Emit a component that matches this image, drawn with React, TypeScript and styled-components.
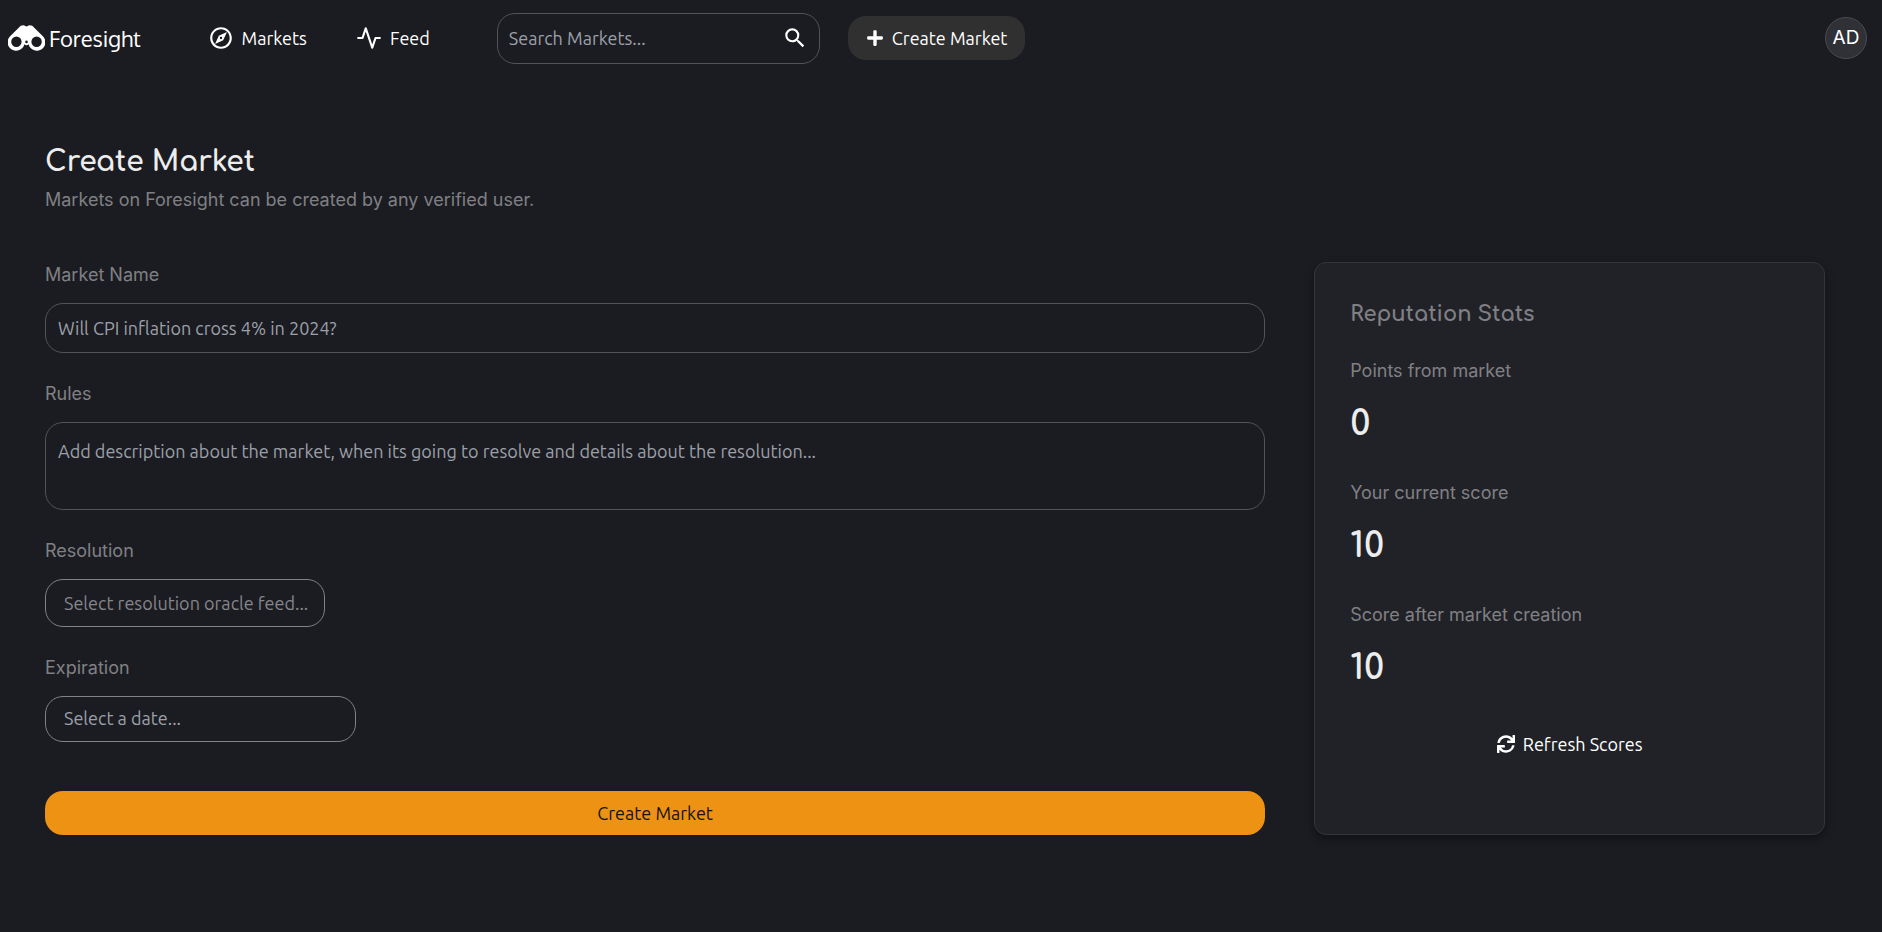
import React, { useId } from 'react';
import styled, { createGlobalStyle, css } from 'styled-components';
import { FaPlus, FaSync } from 'react-icons/fa';
import { FiActivity } from 'react-icons/fi';
import { MdOutlineExplore, MdSearch } from 'react-icons/md';

const colors = {
  page: '#1b1c21',
  card: '#212227',
  cardLine: '#34353a',
  fieldLine: '#525358',
  strongLine: '#818286',
  heading: '#ededed',
  label: '#808084',
  placeholder: '#9da0a9',
  accent: '#ee9213',
  button: '#303030',
};

const fonts = {
  ui: "Ubuntu, 'Noto Sans', sans-serif",
  body: 'Inter, sans-serif',
  display: 'Comfortaa, Lato, sans-serif',
  brand: 'Oxygen, Lato, sans-serif',
};

const GlobalStyle = createGlobalStyle`
  *, *::before, *::after {
    box-sizing: border-box;
  }

  body {
    margin: 0;
    background: ${colors.page};
    color: #fff;
    font: 18px/24px ${fonts.ui};
  }

  h1, h2, p, dl, dt, dd {
    margin: 0;
  }

  button, input, select, textarea {
    font: inherit;
    color: inherit;
  }

  svg {
    flex: none;
  }
`;

const TopBar = styled.header`
  display: flex;
  align-items: center;
  height: 76px;
  padding: 0 15px 0 8px;
`;

const Brand = styled.a`
  display: flex;
  align-items: center;
  gap: 4px;
  color: #fff;
  font: 22px/28px ${fonts.brand};
  text-decoration: none;
`;

const Nav = styled.nav`
  display: flex;
  gap: 49px;
  margin: 0 67px;
`;

const NavLink = styled.a`
  display: flex;
  align-items: center;
  gap: 8px;
  color: #fff;
  text-decoration: none;
`;

const fieldBox = css`
  width: 100%;
  border: 1px solid ${colors.fieldLine};
  border-radius: 18px;
  background: transparent;
  outline: none;

  &::placeholder {
    color: ${colors.placeholder};
    opacity: 1;
  }
`;

const SearchBox = styled.form`
  display: flex;
  align-items: center;
  width: 323px;
  height: 51px;
  margin-right: 28px;
  padding: 0 11px;
  border: 1px solid ${colors.fieldLine};
  border-radius: 18px;
`;

const SearchInput = styled.input`
  flex: 1;
  min-width: 0;
  padding: 0;
  border: 0;
  outline: none;
  background: transparent;

  &::placeholder {
    color: ${colors.placeholder};
    opacity: 1;
  }
`;

const IconButton = styled.button`
  display: flex;
  padding: 0;
  border: 0;
  background: transparent;
  cursor: pointer;
`;

const Button = styled.button<{ $tone: 'dark' | 'accent' | 'plain' }>`
  display: flex;
  align-items: center;
  justify-content: center;
  gap: 8px;
  height: 44px;
  padding: 0 18px;
  border: 0;
  border-radius: 18px;
  cursor: pointer;
  background: ${({ $tone }) =>
    $tone === 'accent' ? colors.accent : $tone === 'dark' ? colors.button : 'transparent'};
  color: ${({ $tone }) => ($tone === 'accent' ? '#15130f' : '#fff')};
`;

const Avatar = styled.button`
  display: grid;
  place-items: center;
  width: 42px;
  height: 42px;
  margin-left: auto;
  padding: 0;
  border: 1px solid #4a4b50;
  border-radius: 50%;
  background: #303136;
  font: 19px/24px ${fonts.body};
  cursor: pointer;
`;

const Main = styled.main`
  padding: 66px 57px 97px 45px;
`;

const PageTitle = styled.h1`
  color: ${colors.heading};
  font: 700 28px/40px ${fonts.display};
`;

const Intro = styled.p`
  margin: 5px 0 50px;
  color: ${colors.label};
  font: 18px/25px ${fonts.body};
`;

const Columns = styled.div`
  display: grid;
  grid-template-columns: minmax(0, 43fr) minmax(0, 18fr);
  gap: 49px;
`;

const MarketForm = styled.form`
  display: flex;
  flex-direction: column;
  gap: 28px;
`;

const Field = styled.div`
  display: flex;
  flex-direction: column;
  gap: 16px;
`;

const Label = styled.label`
  color: ${colors.label};
  font: 18px/25px ${fonts.body};
`;

const TextInput = styled.input`
  ${fieldBox}
  height: 50px;
  padding: 0 12px;
`;

const TextArea = styled.textarea`
  ${fieldBox}
  display: block;
  height: 88px;
  padding: 16px 12px;
  resize: none;
`;

const Select = styled.select`
  ${fieldBox}
  width: 280px;
  height: 48px;
  padding: 0 10px 0 18px;
  border-color: ${colors.strongLine};
  color: #85868a;
  appearance: none;
`;

const DateInput = styled.input`
  ${fieldBox}
  width: 311px;
  height: 46px;
  padding: 0 18px 2px;
  border-color: ${colors.strongLine};
`;

const Submit = styled(Button)`
  margin-top: 21px;
`;

const StatsCard = styled.aside`
  display: flex;
  flex-direction: column;
  padding: 35px;
  border: 1px solid ${colors.cardLine};
  border-radius: 12px;
  background: ${colors.card};
  box-shadow: 0 4px 8px rgba(0, 0, 0, 0.4);
`;

const CardTitle = styled.h2`
  color: ${colors.label};
  font: 700 21px/32px ${fonts.display};
`;

const Stats = styled.dl`
  display: flex;
  flex-direction: column;
  gap: 34px;
  margin: 28px 0 32px;
`;

const StatName = styled.dt`
  color: ${colors.label};
  font: 18px/25px ${fonts.body};
`;

const StatValue = styled.dd`
  margin-top: 19px;
  color: ${colors.heading};
  font: 700 35px/44px ${fonts.display};
`;

const CenterRow = styled.div`
  display: flex;
  justify-content: center;
`;

function BinocularsIcon() {
  return (
    <svg width="37" height="26" viewBox="0 0 37 26" fill="none" aria-hidden="true">
      <path
        fill="#fff"
        fillRule="evenodd"
        d="M2.6 10.8 11 2.4C12.6.3 15.4-.6 17.4.9L18.5 1.6 19.6.9C21.6-.6 24.4.3 26 2.4L34.4 10.8A8.5 8.5 0 1 1 20.6 19.2a2.6 2.6 0 0 1-4.2 0A8.5 8.5 0 1 1 2.6 10.8ZM8.4 11.6a5.2 5.2 0 1 0 0 10.4 5.2 5.2 0 0 0 0-10.4Zm20.2 0a5.2 5.2 0 1 0 0 10.4 5.2 5.2 0 0 0 0-10.4ZM18.5 15.6a1.3 1.3 0 1 0 0 2.6 1.3 1.3 0 0 0 0-2.6Z"
      />
    </svg>
  );
}

const stats = [
  { name: 'Points from market', value: 0 },
  { name: 'Your current score', value: 10 },
  { name: 'Score after market creation', value: 10 },
];

export default function App() {
  const id = useId();
  const stay = (event: React.FormEvent) => event.preventDefault();

  return (
    <>
      <GlobalStyle />
      <TopBar>
        <Brand href="#">
          <BinocularsIcon />
          Foresight
        </Brand>
        <Nav>
          <NavLink href="#markets">
            <MdOutlineExplore size={26} />
            Markets
          </NavLink>
          <NavLink href="#feed">
            <FiActivity size={26} />
            Feed
          </NavLink>
        </Nav>
        <SearchBox role="search" onSubmit={stay}>
          <SearchInput type="text" placeholder="Search Markets..." aria-label="Search Markets" />
          <IconButton type="submit" aria-label="Search">
            <MdSearch size={26} />
          </IconButton>
        </SearchBox>
        <Button type="button" $tone="dark">
          <FaPlus size={18} />
          Create Market
        </Button>
        <Avatar type="button">AD</Avatar>
      </TopBar>

      <Main>
        <PageTitle>Create Market</PageTitle>
        <Intro>Markets on Foresight can be created by any verified user.</Intro>
        <Columns>
          <MarketForm onSubmit={stay}>
            <Field>
              <Label htmlFor={`${id}-name`}>Market Name</Label>
              <TextInput
                id={`${id}-name`}
                type="text"
                placeholder="Will CPI inflation cross 4% in 2024?"
              />
            </Field>
            <Field>
              <Label htmlFor={`${id}-rules`}>Rules</Label>
              <TextArea
                id={`${id}-rules`}
                placeholder="Add description about the market, when its going to resolve and details about the resolution..."
              />
            </Field>
            <Field>
              <Label htmlFor={`${id}-feed`}>Resolution</Label>
              <Select id={`${id}-feed`} defaultValue="">
                <option value="">Select resolution oracle feed...</option>
              </Select>
            </Field>
            <Field>
              <Label htmlFor={`${id}-date`}>Expiration</Label>
              <DateInput id={`${id}-date`} type="text" placeholder="Select a date..." />
            </Field>
            <Submit type="submit" $tone="accent">
              Create Market
            </Submit>
          </MarketForm>

          <StatsCard>
            <CardTitle>Reputation Stats</CardTitle>
            <Stats>
              {stats.map(({ name, value }) => (
                <div key={name}>
                  <StatName>{name}</StatName>
                  <StatValue>{value}</StatValue>
                </div>
              ))}
            </Stats>
            <CenterRow>
              <Button type="button" $tone="plain">
                <FaSync size={18} />
                Refresh Scores
              </Button>
            </CenterRow>
          </StatsCard>
        </Columns>
      </Main>
    </>
  );
}
